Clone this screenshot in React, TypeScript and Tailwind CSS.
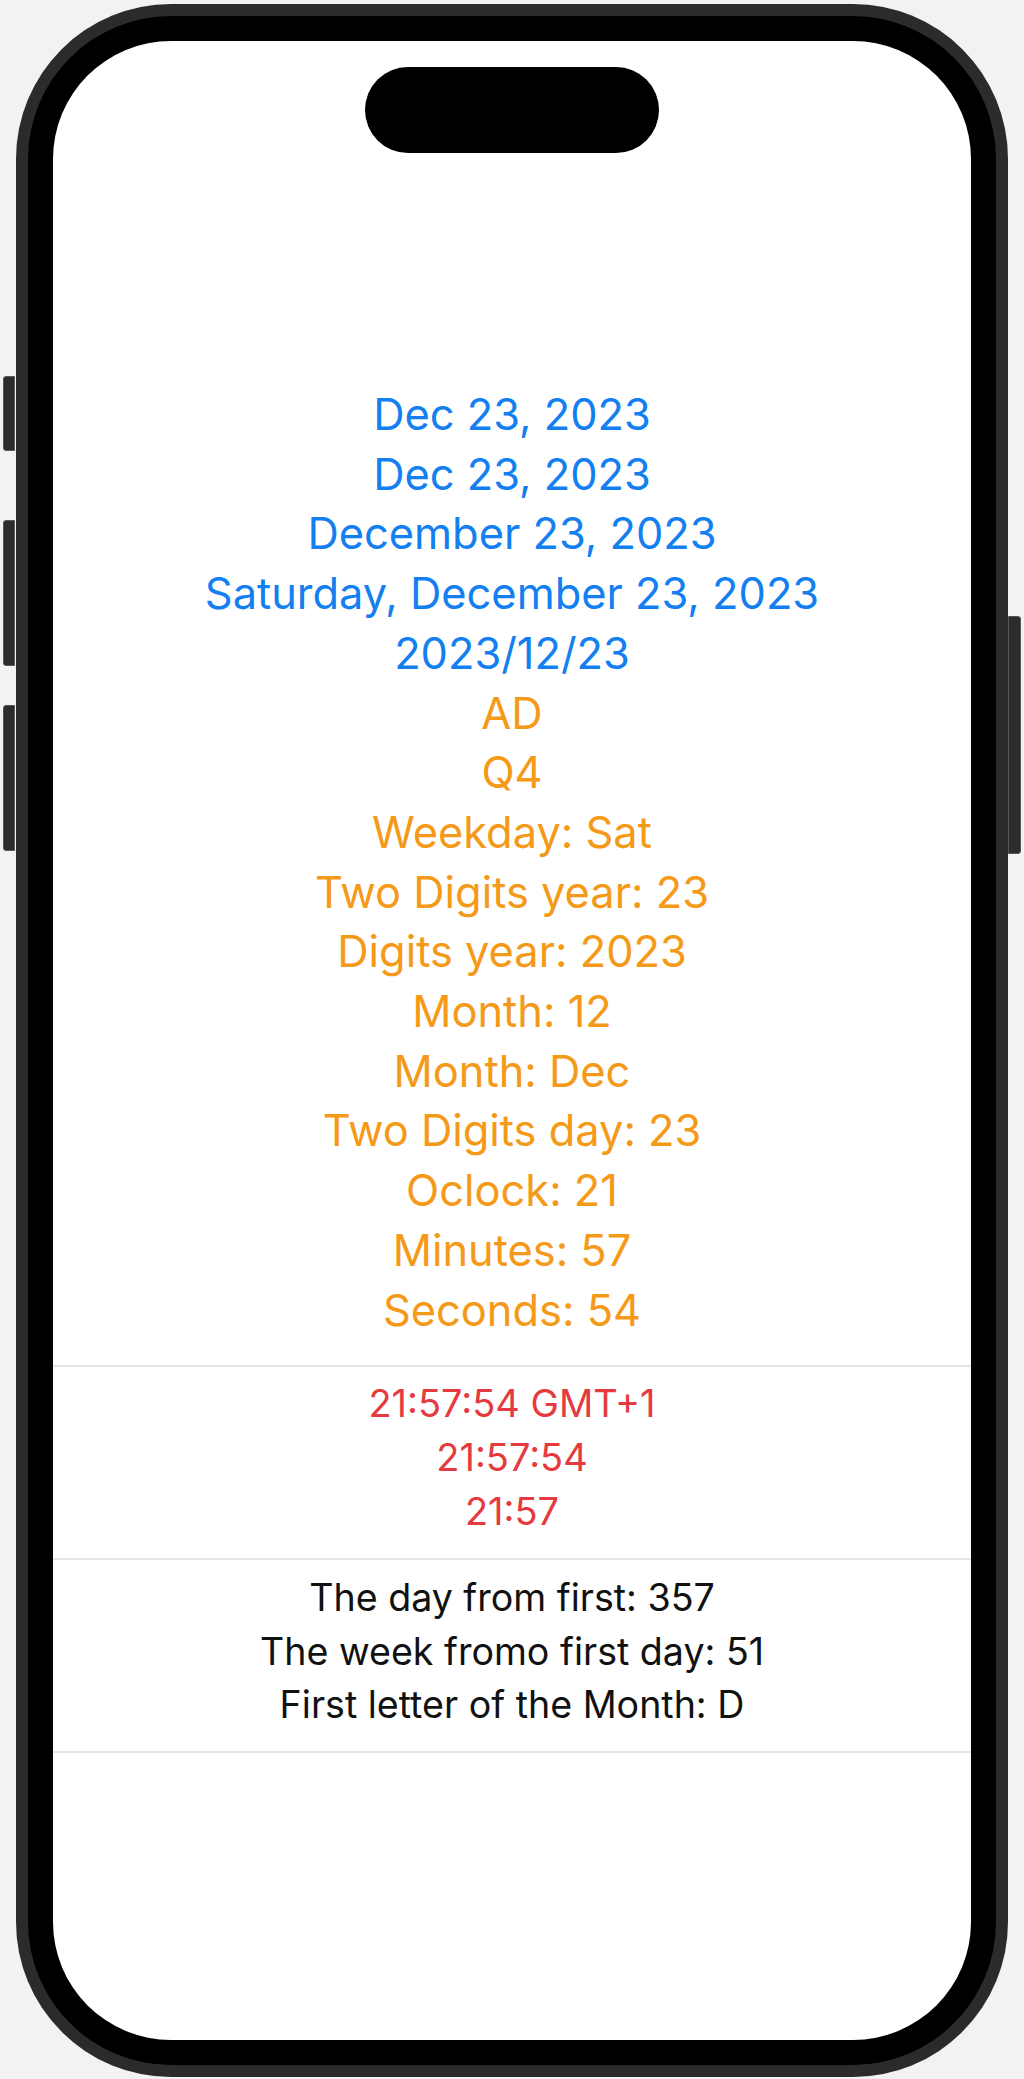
import React from 'react';

const blueLines = [
  'Dec 23, 2023',
  'Dec 23, 2023',
  'December 23, 2023',
  'Saturday, December 23, 2023',
  '2023/12/23',
];

const orangeLines = [
  'AD',
  'Q4',
  'Weekday: Sat',
  'Two Digits year: 23',
  'Digits year: 2023',
  'Month: 12',
  'Month: Dec',
  'Two Digits day: 23',
  'Oclock: 21',
  'Minutes: 57',
  'Seconds: 54',
];

const timeLines = ['21:57:54 GMT+1', '21:57:54', '21:57'];

const infoLines = [
  'The day from first: 357',
  'The week fromo first day: 51',
  'First letter of the Month: D',
];

function Divider() {
  return <div className="h-[2px] w-full bg-[#e4e4e4]" />;
}

export default function App() {
  return (
    <div
      className="relative w-[1024px] h-[2079px] bg-[#f2f2f2] overflow-hidden"
      style={{ fontFamily: 'Inter, "Noto Sans", sans-serif' }}
    >
      {/* side buttons */}
      <div className="absolute left-[3px] top-[376px] w-[12px] h-[75px] rounded-l-[3px] bg-[#2c2c2c] border border-[#555]" />
      <div className="absolute left-[3px] top-[520px] w-[12px] h-[146px] rounded-l-[3px] bg-[#2c2c2c] border border-[#555]" />
      <div className="absolute left-[3px] top-[705px] w-[12px] h-[146px] rounded-l-[3px] bg-[#2c2c2c] border border-[#555]" />
      <div className="absolute left-[1008px] top-[616px] w-[13px] h-[238px] rounded-r-[3px] bg-[#2c2c2c] border border-[#555]" />

      {/* phone frame */}
      <div className="ml-[16px] mt-[4px] w-[992px] h-[2073px] rounded-[155px] bg-[#2b2b2b] p-[12px]">
        <div className="w-full h-full rounded-[143px] bg-black p-[25px]">
          <div className="w-full h-full rounded-[118px] bg-white overflow-hidden flex flex-col">
            {/* dynamic island */}
            <div className="mt-[26px] mx-auto w-[294px] h-[86px] rounded-[43px] bg-black shrink-0" />

            <div className="mt-[232px] flex flex-col">
              <div className="flex flex-col items-center text-[43.4px] leading-[59.7px] pb-[25px]">
                {blueLines.map((t, i) => (
                  <div key={'b' + i} className="text-[#137ff0]">{t}</div>
                ))}
                {orangeLines.map((t, i) => (
                  <div key={'o' + i} className="text-[#f59a18]">{t}</div>
                ))}
              </div>
              <Divider />
              <div className="flex flex-col items-center text-[38px] leading-[54px] pt-[9px] pb-[20px] text-[#e53a40]">
                {timeLines.map((t, i) => (
                  <div key={'t' + i}>{t}</div>
                ))}
              </div>
              <Divider />
              <div className="flex flex-col items-center text-[37.6px] leading-[53.5px] pt-[11px] pb-[19.5px] text-[#111]">
                {infoLines.map((t, i) => (
                  <div key={'i' + i}>{t}</div>
                ))}
              </div>
              <Divider />
            </div>
          </div>
        </div>
      </div>
    </div>
  );
}
